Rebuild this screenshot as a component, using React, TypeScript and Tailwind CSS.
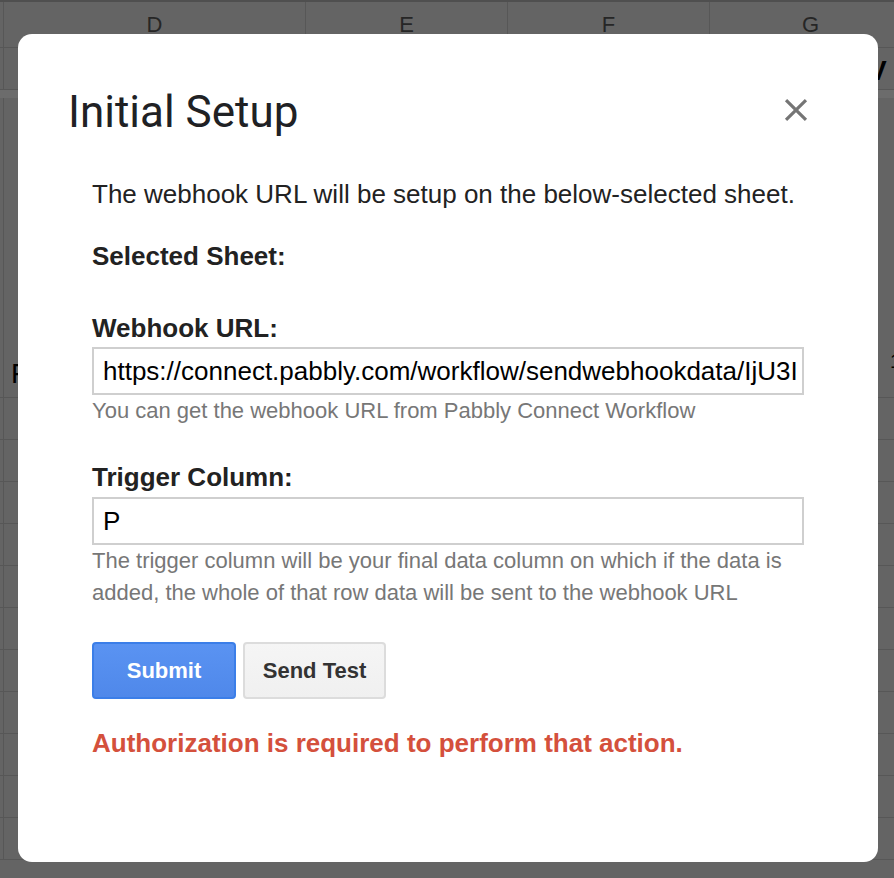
import React from 'react'

const columns = [
  { key: 'D', width: 'w-[302px]' },
  { key: 'E', width: 'w-[202px]' },
  { key: 'F', width: 'w-[202px]' },
  { key: 'G', width: 'w-[202px]' },
]

function SheetRow ({ height, children }: { height: string, children?: React.ReactNode[] }) {
  return (
    <div className={`flex shrink-0 border-b border-[#575757] ${height}`}>
      <div className="w-[4px] shrink-0 border-r border-[#575757]" />
      {columns.map((col, i) => (
        <div key={col.key} className={`${col.width} relative shrink-0 overflow-hidden border-r border-[#575757]`}>
          {children?.[i]}
        </div>
      ))}
    </div>
  )
}

function Sheet () {
  const rows = Array.from({ length: 11 })

  return (
    <div className="flex flex-col border-t-2 border-[#4f4f4f]">
      <div className="flex h-[46px] shrink-0 border-b border-[#575757]">
        <div className="w-[4px] shrink-0 border-r border-[#575757]" />
        {columns.map(col => (
          <div
            key={col.key}
            className={`${col.width} flex shrink-0 items-center justify-center border-r border-[#575757] text-[22px] text-[#262626]`}
          >
            {col.key}
          </div>
        ))}
      </div>

      <SheetRow height="h-[42px]">
        {[
          null,
          null,
          null,
          <div key="g" className="pl-[158px] pt-[8px] text-[28px] font-bold leading-[30px] text-black">V</div>,
        ]}
      </SheetRow>

      <div className="h-[8px] shrink-0 bg-[#6c6c6c]" />

      <SheetRow height="h-[300px]">
        {[
          <div key="d" className="absolute bottom-[8px] left-[7px] text-[28px] leading-[30px] text-black">F</div>,
          null,
          null,
          <div key="g" className="absolute bottom-[24px] left-[180px] text-[20px] leading-[24px] text-black">1</div>,
        ]}
      </SheetRow>

      {rows.map((_, i) => (
        <SheetRow key={i} height="h-[42px]" />
      ))}
    </div>
  )
}

function CloseIcon () {
  return (
    <svg width="38" height="38" viewBox="0 0 24 24" fill="#757575">
      <path d="M19 6.41L17.59 5 12 10.59 6.41 5 5 6.41 10.59 12 5 17.59 6.41 19 12 13.41 17.59 19 19 17.59 13.41 12z" />
    </svg>
  )
}

function Dialog () {
  return (
    <div className="absolute left-[18px] top-[34px] flex h-[828px] w-[860px] flex-col rounded-[14px] bg-white">
      <div className="flex items-center justify-between pl-[50px] pr-[63px] pt-[52px]">
        <h1 className="font-['Roboto',sans-serif] text-[44px] font-normal leading-[52px] text-[#202124]">
          Initial Setup
        </h1>
        <button type="button" className="-mt-[4px] flex h-[38px] w-[38px] items-center justify-center">
          <CloseIcon />
        </button>
      </div>

      <div className="flex w-[786px] flex-col pl-[74px] text-[26px] leading-[30px] text-[#222]">
        <p className="mt-[41px]">
          The webhook URL will be setup on the below-selected sheet.
        </p>

        <p className="mt-[32px] font-bold">Selected Sheet:</p>

        <label className="mt-[42px] font-bold">Webhook URL:</label>
        <div className="mt-[4px] flex h-[48px] items-center overflow-hidden whitespace-nowrap border-2 border-[#cfcfcf] pl-[9px] pr-[4px] text-black">
          https://connect.pabbly.com/workflow/sendwebhookdata/IjU3I
        </div>
        <p className="text-[22px] leading-[32px] text-[#777]">
          You can get the webhook URL from Pabbly Connect Workflow
        </p>

        <label className="mt-[35px] font-bold">Trigger Column:</label>
        <div className="mt-[5px] flex h-[48px] items-center border-2 border-[#cfcfcf] pl-[9px] text-black">
          P
        </div>
        <p className="text-[22px] leading-[32px] text-[#777]">
          The trigger column will be your final data column on which if the data is added, the whole of that row data will be sent to the webhook URL
        </p>

        <div className="mt-[33px] flex gap-[7px]">
          <button
            type="button"
            className="h-[57px] w-[144px] rounded-[4px] border-2 border-[#3b7ee8] bg-linear-to-b from-[#5a93f2] to-[#4f88ea] text-[22px] font-bold text-white"
          >
            Submit
          </button>
          <button
            type="button"
            className="h-[57px] w-[143px] rounded-[4px] border-2 border-[#dcdcdc] bg-linear-to-b from-[#f5f5f5] to-[#f0f0f0] text-[22px] font-bold text-[#333]"
          >
            Send Test
          </button>
        </div>

        <p className="mt-[29px] font-bold text-[#d4503c]">
          Authorization is required to perform that action.
        </p>
      </div>
    </div>
  )
}

export default function App () {
  return (
    <div className="relative h-[878px] w-[894px] overflow-hidden bg-[#646464] font-['Liberation_Sans',Arial,sans-serif]">
      <Sheet />
      <Dialog />
    </div>
  )
}
